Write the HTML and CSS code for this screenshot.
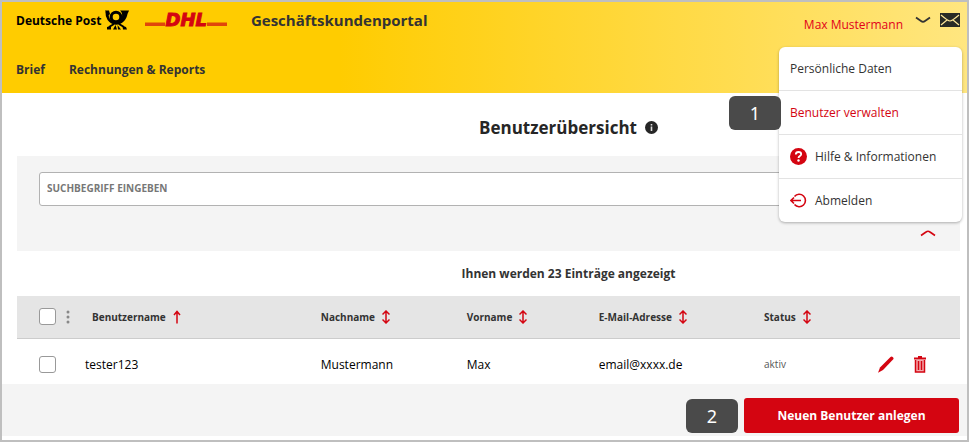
FILE: index.html
```html
<!DOCTYPE html>
<html lang="de">
<head>
    <meta charset="UTF-8">
    <meta name="viewport" content="width=device-width, initial-scale=1.0">
    <title>Geschäftskundenportal - Benutzerübersicht</title>
    <link rel="stylesheet" href="styles.css">
</head>
<body>
    <header class="header">
        <div class="topbar">
            <a href="#" class="brand">
                <span>Deutsche Post</span>
                <svg class="horn" viewBox="0 0 24 20" aria-hidden="true">
                    <g fill="none" stroke="#000">
                        <circle cx="11" cy="7" r="4.800" stroke-width="3"/>
                        <path d="M1.800 2 C1.500 7 4 12.500 11 13.500 C16 13.500 19 9 19 2" stroke-width="2.600"/>
                        <path d="M9 14 L4 17 M14 14 L19 17" stroke-width="2"/>
                    </g>
                    <path d="M15 .5 H24 C23.500 2 23 2.500 22.500 4 C21.500 9 19 13 13 14.500 L15 11 C18 8 18 3 15 .5 Z"/>
                    <path d="M0 .5 H4 L5 4 L3 6 C1.500 4.500 1 2.500 0 .5 Z"/>
                    <path d="M2 17 L6 16 L6 19.500 H2 Z M8 19.500 L10.500 15 L12 19.500 Z M13 19.500 L12.500 15 L16 19.500 Z M21 17 L17.500 16 L18 19.500 H22 Z"/>
                </svg>
            </a>
            <a href="#" class="dhl">
                <span class="stripes"></span>
                <span class="dhl-name">DHL</span>
                <span class="stripes"></span>
            </a>
            <span class="portal">Geschäftskundenportal</span>
            <div class="account">
                <button type="button" class="user">
                    <span>Max Mustermann</span>
                    <svg width="16" height="8" viewBox="0 0 16 8" aria-hidden="true"><path d="M1 1.500 L6 5 Q8 6.500 10 5 L15 1.500" fill="none" stroke="#333" stroke-width="1.800"/></svg>
                </button>
                <a href="#" class="mail" aria-label="Nachrichten">
                    <svg width="20" height="14" viewBox="0 0 20 14" aria-hidden="true">
                        <rect width="20" height="14" fill="#292b26"/>
                        <path d="M1 2 Q8 8 10 8 T19 2 M1 12 L7 7 M19 12 L13 7" fill="none" stroke="#ffe89a" stroke-width="1.200"/>
                    </svg>
                </a>
                <ul class="menu">
                    <li><a href="#">Persönliche Daten</a></li>
                    <li><a href="#" class="active">Benutzer verwalten</a><span class="step step-menu">1</span></li>
                    <li><a href="#">
                        <svg width="17" height="17" viewBox="0 0 17 17" aria-hidden="true">
                            <circle cx="8.500" cy="8.500" r="8.500" fill="#d40511"/>
                            <path d="M5.800 6.500 Q5.800 4 8.500 4 T11.200 6.300 C11.200 8 8.500 8.200 8.500 10" fill="none" stroke="#fff" stroke-width="1.800"/>
                            <circle cx="8.500" cy="12.500" r="1.200" fill="#fff"/>
                        </svg>
                        Hilfe &amp; Informationen</a></li>
                    <li><a href="#">
                        <svg width="17" height="17" viewBox="0 0 17 17" aria-hidden="true">
                            <path d="M4.500 4.500 A6.200 6.200 0 1 1 4.500 12.500 M11 8.500 H1 M4 5.500 L1 8.500 L4 11.500" fill="none" stroke="#d40511" stroke-width="1.600"/>
                        </svg>
                        Abmelden</a></li>
                </ul>
            </div>
        </div>
        <nav class="nav">
            <a href="#">Brief</a>
            <a href="#">Rechnungen &amp; Reports</a>
        </nav>
    </header>

    <main class="content">
        <h1 class="title">
            Benutzerübersicht
            <svg width="13" height="13" viewBox="0 0 13 13" aria-hidden="true">
                <circle cx="6.500" cy="6.500" r="6.500" fill="#262626"/>
                <path d="M6.500 5.500 V10 M6.500 3 V4.500" fill="none" stroke="#ddd" stroke-width="1.600"/>
            </svg>
        </h1>

        <form class="search">
            <input type="text" aria-label="Suchbegriff eingeben" placeholder="SUCHBEGRIFF EINGEBEN">
            <button type="button" class="collapse" aria-label="Suche einklappen">
                <svg width="16" height="8" viewBox="0 0 16 8" aria-hidden="true"><path d="M1 6.500 L6 3 Q8 1.500 10 3 L15 6.500" fill="none" stroke="#d40511" stroke-width="1.600"/></svg>
            </button>
        </form>

        <p class="count">Ihnen werden 23 Einträge angezeigt</p>

        <table class="users">
            <colgroup>
                <col class="col-check">
                <col class="col-user">
                <col class="col-last">
                <col class="col-first">
                <col>
                <col class="col-status">
                <col class="col-actions">
            </colgroup>
            <thead>
                <tr>
                    <th>
                        <div class="select">
                            <input type="checkbox" aria-label="Alle auswählen">
                            <svg width="4" height="14" viewBox="0 0 4 14" fill="#888" aria-hidden="true"><circle cx="2" cy="2" r="1.500"/><circle cx="2" cy="7" r="1.500"/><circle cx="2" cy="12" r="1.500"/></svg>
                        </div>
                    </th>
                    <th class="indent"><button type="button" class="sort">Benutzername <svg width="8" height="14" viewBox="0 0 8 14"><path d="M4 13.500 V1.500 M1 5 L4 1.500 L7 5"/></svg></button></th>
                    <th><button type="button" class="sort">Nachname <svg width="8" height="14" viewBox="0 0 8 14"><path d="M4 1.500 V12.500 M.5 4.500 L4 1 L7.500 4.500 M.5 9.500 L4 13 L7.500 9.500"/></svg></button></th>
                    <th><button type="button" class="sort">Vorname <svg width="8" height="14" viewBox="0 0 8 14"><path d="M4 1.500 V12.500 M.5 4.500 L4 1 L7.500 4.500 M.5 9.500 L4 13 L7.500 9.500"/></svg></button></th>
                    <th><button type="button" class="sort">E-Mail-Adresse <svg width="8" height="14" viewBox="0 0 8 14"><path d="M4 1.500 V12.500 M.5 4.500 L4 1 L7.500 4.500 M.5 9.500 L4 13 L7.500 9.500"/></svg></button></th>
                    <th><button type="button" class="sort">Status <svg width="8" height="14" viewBox="0 0 8 14"><path d="M4 1.500 V12.500 M.5 4.500 L4 1 L7.500 4.500 M.5 9.500 L4 13 L7.500 9.500"/></svg></button></th>
                    <th></th>
                </tr>
            </thead>
            <tbody>
                <tr>
                    <td>
                        <div class="select">
                            <input type="checkbox" aria-label="tester123 auswählen">
                        </div>
                    </td>
                    <td>tester123</td>
                    <td>Mustermann</td>
                    <td>Max</td>
                    <td>email@xxxx.de</td>
                    <td class="status">aktiv</td>
                    <td>
                        <div class="actions">
                            <button type="button" aria-label="Bearbeiten">
                                <svg width="16" height="17" viewBox="0 0 16 17" fill="#d40511" aria-hidden="true"><path d="M12.500 1 Q13.500 0 14.700 1 T15.500 3 L5 14 L0 16.800 L2 11.500 Z"/></svg>
                            </button>
                            <button type="button" aria-label="Löschen">
                                <svg width="12" height="17" viewBox="0 0 12 17" fill="none" stroke="#d40511" aria-hidden="true"><path d="M0 2.500 H12 M4 1 H8" stroke-width="2"/><path d="M1.500 4 V16 H10.500 V4" fill="#f3a9ad" stroke-width="1.500"/><path d="M4.500 5 V14 M7.500 5 V14" stroke-width="1.500"/></svg>
                            </button>
                        </div>
                    </td>
                </tr>
            </tbody>
        </table>
    </main>

    <footer class="footer">
        <span class="step">2</span>
        <button type="button" class="create">Neuen Benutzer anlegen</button>
    </footer>
</body>
</html>
```
FILE: styles.css
```css
* {
    box-sizing: border-box;
}

body {
    margin: 0;
    min-height: 100vh;
    border: 2px solid #bfbfbf;
    background-color: #fff;
    font-family: "Open Sans", "Noto Sans", sans-serif;
    font-size: 12px;
    color: #333;
}

a {
    color: inherit;
    text-decoration: none;
}

button {
    padding: 0;
    border: none;
    background: none;
    font: inherit;
    color: inherit;
    cursor: pointer;
}

svg {
    display: block;
    flex: none;
}

.header {
    height: 91px;
    padding: 0 7px 0 14px;
    background: linear-gradient(to right, #fc0 35%, #ffe680);
}

.topbar {
    display: flex;
    align-items: center;
    height: 36px;
}

.brand {
    display: flex;
    align-items: center;
    gap: 4px;
    font-size: 12px;
    font-weight: 700;
    color: #000;
}

.horn {
    width: 24px;
    height: 20px;
}

.dhl {
    display: flex;
    align-items: center;
    margin-left: 16px;
    font-family: "DejaVu Sans", sans-serif;
    font-size: 18px;
    font-style: italic;
    font-weight: 700;
    line-height: 16px;
    color: #d40511;
}

.dhl-name {
    -webkit-text-stroke: 1px #d40511;
}

.stripes {
    width: 20px;
    height: 4px;
    margin-top: 8px;
    border-top: 1px solid #f08a00;
    background-color: #e0450b;
}

.portal {
    margin-left: 24px;
    font-size: 15px;
    font-weight: 700;
}

.account {
    position: relative;
    display: flex;
    gap: 9px;
    align-items: center;
    margin-left: auto;
}

.user {
    display: flex;
    gap: 12px;
    align-items: center;
    color: #e2001a;
}

.user span {
    padding-top: 8px;
}

.menu {
    position: absolute;
    z-index: 1;
    top: 39px;
    right: -2px;
    width: 183px;
    margin: 0;
    padding: 0;
    list-style: none;
    background-color: #fff;
    border-radius: 6px;
    box-shadow: 0 1px 3px rgba(0, 0, 0, 0.3);
}

.menu li {
    position: relative;
}

.menu li + li {
    border-top: 1px solid #e3e3e3;
}

.menu a {
    display: flex;
    align-items: center;
    gap: 8px;
    height: 43px;
    padding-left: 11px;
}

.menu .active {
    color: #d40511;
}

.step {
    display: flex;
    align-items: center;
    justify-content: center;
    width: 52px;
    height: 34px;
    border-radius: 6px;
    background-color: #4a4a4a;
    font-family: "Noto Sans", sans-serif;
    font-size: 18px;
    color: #fff;
}

.step-menu {
    position: absolute;
    top: 5px;
    right: 181px;
}

.nav {
    display: flex;
    gap: 24px;
    padding-top: 23px;
    font-weight: 700;
}

.content {
    padding: 0 7px 0 15px;
}

.title {
    display: flex;
    align-items: center;
    justify-content: center;
    gap: 8px;
    height: 63px;
    margin: 0;
    padding: 6px 0 0 160px;
    font-size: 17px;
    font-weight: 700;
    color: #262626;
}

.search {
    height: 95px;
    padding: 16px 22px;
    background-color: #f4f4f4;
}

.search input {
    display: block;
    width: 100%;
    height: 34px;
    padding: 0 7px 2px;
    border: 1px solid #b2b2b2;
    border-radius: 3px;
    font: inherit;
    font-size: 10px;
    font-weight: 700;
}

.search input::placeholder {
    color: #777;
}

.collapse {
    display: block;
    margin: 23px 2px 0 auto;
}

.count {
    margin: 0;
    padding-left: 160px;
    line-height: 45px;
    text-align: center;
    font-weight: 700;
}

.users {
    width: 100%;
    table-layout: fixed;
    border-collapse: collapse;
    color: #000;
}

.col-check {
    width: 68px;
}

.col-user {
    width: 25%;
}

.col-last {
    width: 146px;
}

.col-first {
    width: 132px;
}

.col-status {
    width: 114px;
}

.col-actions {
    width: 82px;
}

.users th,
.users td {
    padding: 0;
    text-align: left;
}

.users th {
    height: 42px;
    background-color: #e5e5e5;
    border-bottom: 1px solid #ccc;
}

.users td {
    height: 46px;
    padding-top: 6px;
}

.users .indent {
    padding-left: 7px;
}

.users .status {
    font-size: 10px;
    color: #555;
}

.select {
    display: flex;
    align-items: center;
    gap: 10px;
    padding-left: 22px;
}

.select input {
    appearance: none;
    width: 17px;
    height: 17px;
    margin: 0;
    border: 1px solid #999;
    border-radius: 3px;
    background-color: #fff;
}

.sort {
    display: flex;
    align-items: center;
    gap: 7px;
    font-size: 10px;
    font-weight: 700;
    color: #333;
}

.sort svg {
    fill: none;
    stroke: #d40511;
    stroke-width: 1.5;
}

.actions {
    display: flex;
    gap: 20px;
}

.footer {
    display: flex;
    align-items: center;
    justify-content: flex-end;
    gap: 6px;
    height: 52px;
    padding: 11px 8px 0;
    background-color: #f4f4f4;
}

.create {
    width: 215px;
    height: 35px;
    border-radius: 3px;
    background-color: #d40511;
    font-size: 12px;
    font-weight: 700;
    color: #fff;
}
```
